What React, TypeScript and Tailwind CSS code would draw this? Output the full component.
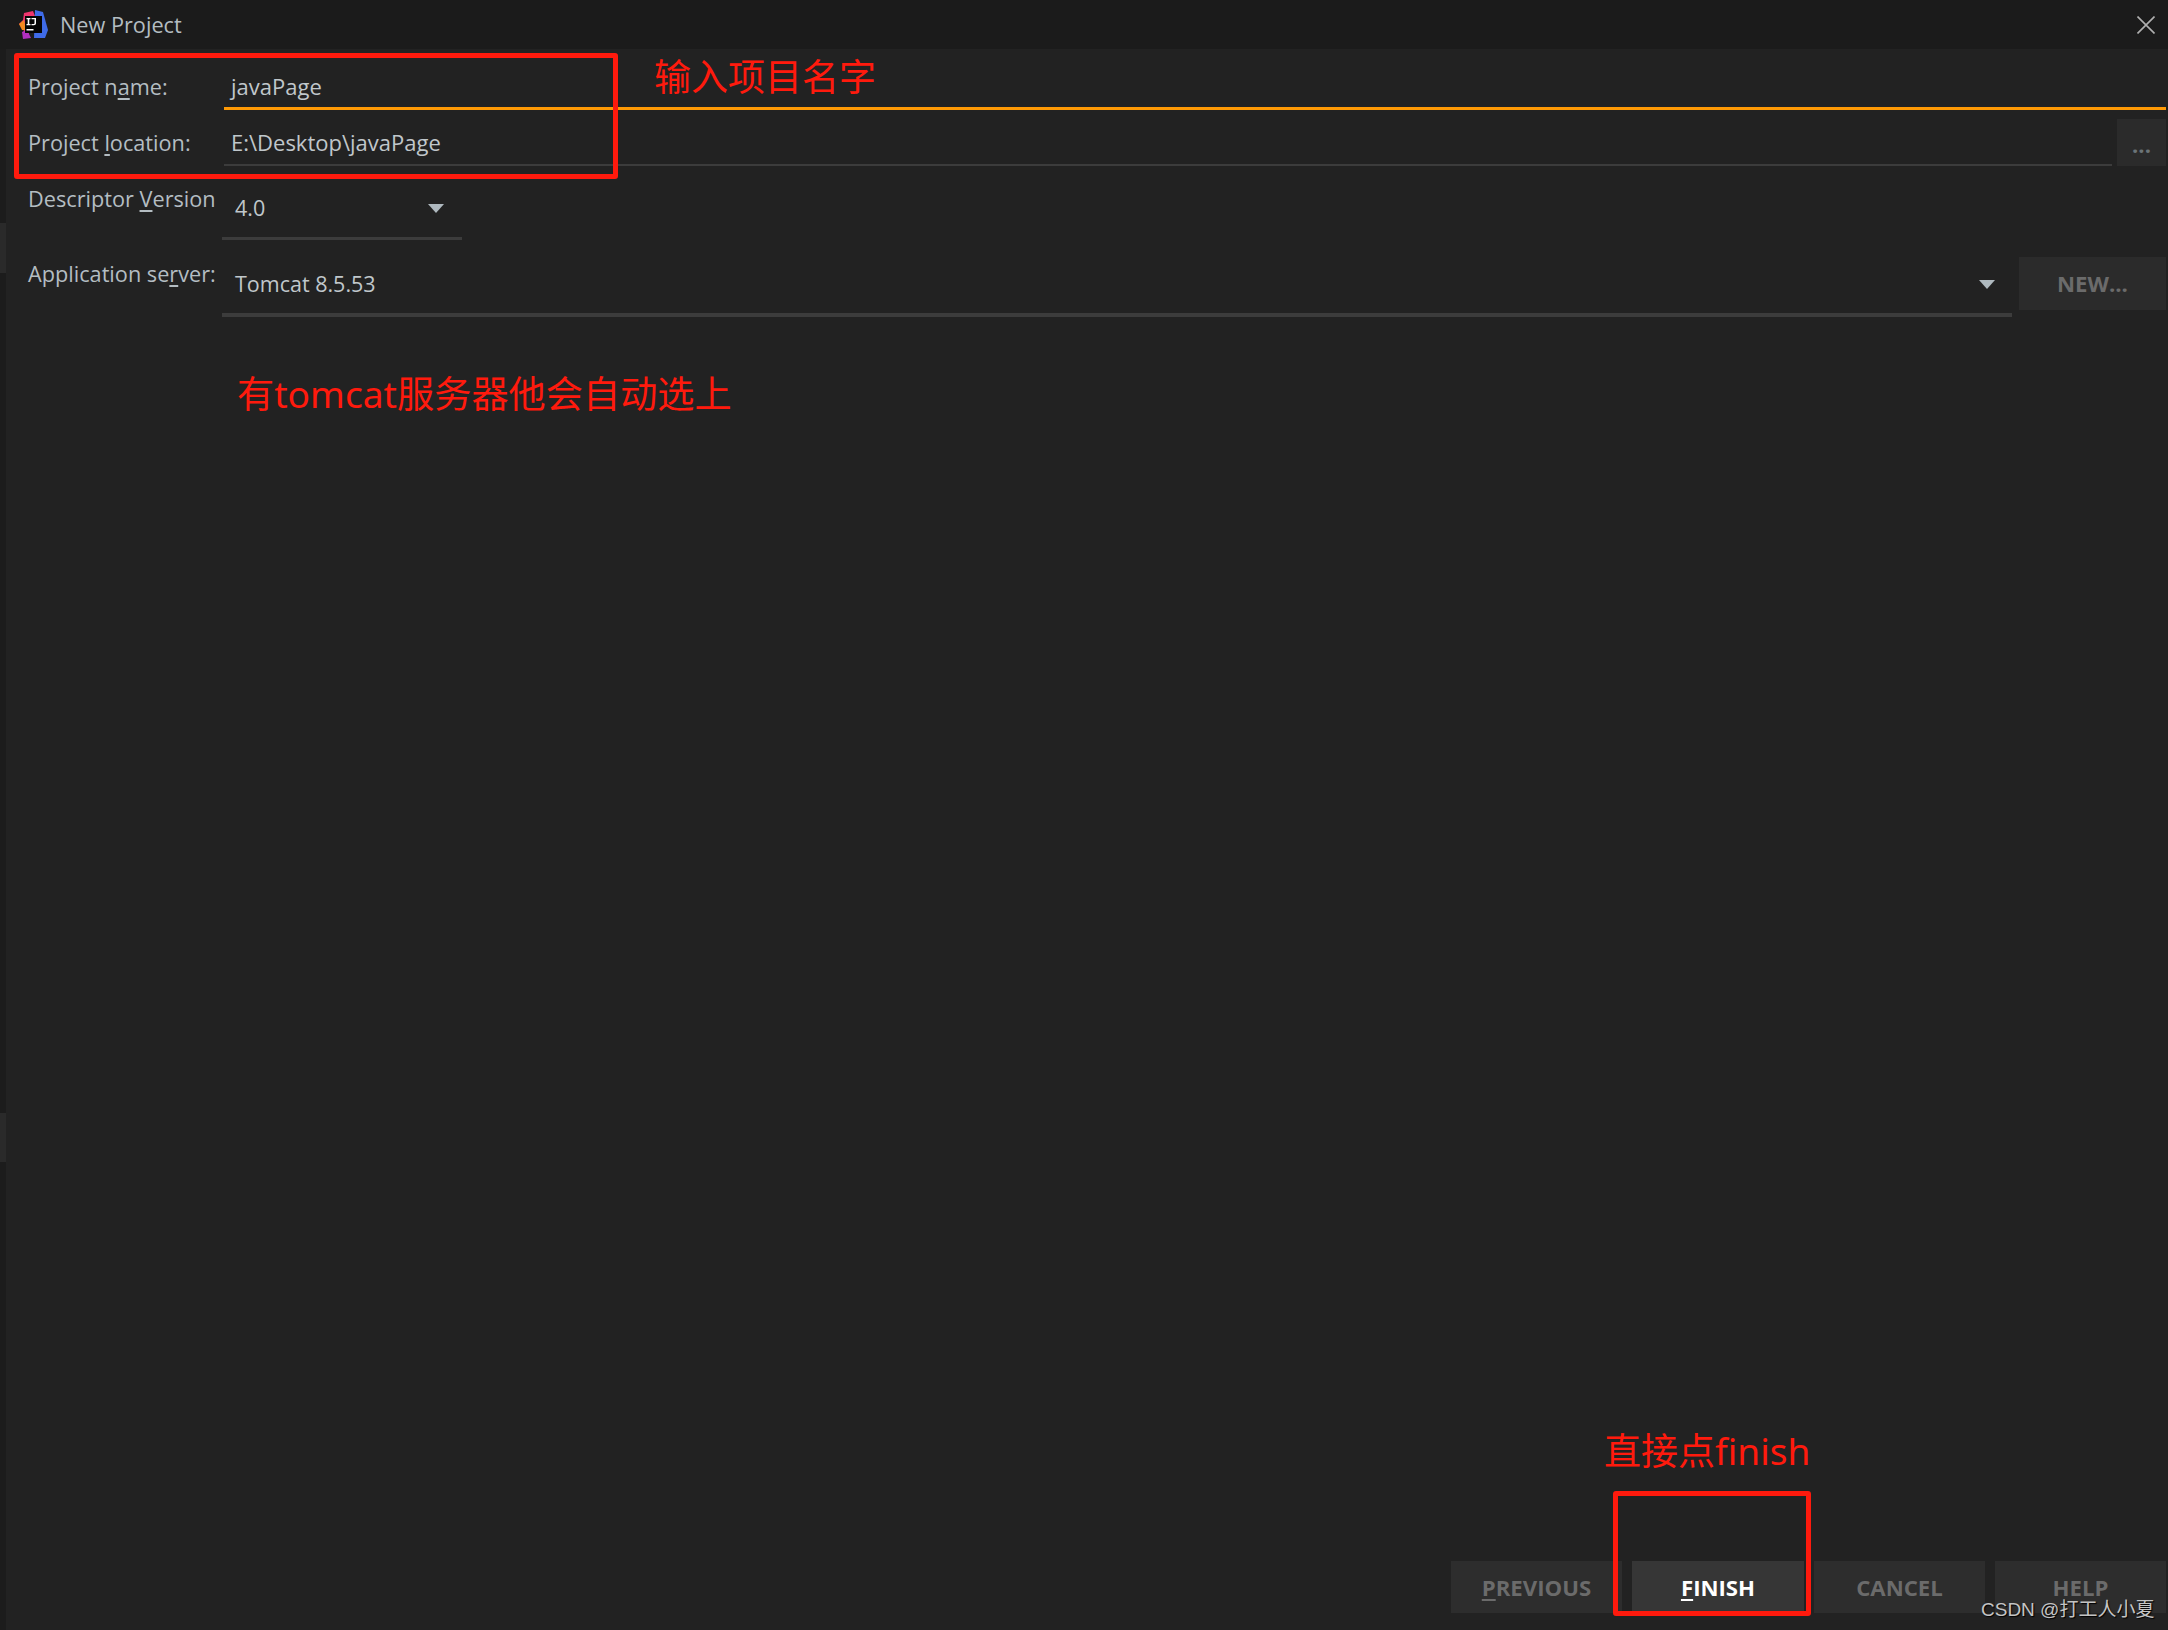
const ui = { fontFamily: '"Open Sans", "Noto Sans", sans-serif' }
const cjk = { fontFamily: '"Noto Sans", "Noto Sans CJK SC", sans-serif' }

const Logo = () => (
	<svg width="30" height="30" viewBox="0 0 30 30" className="mt-[2px] shrink-0">
		<path d="M5 3 L14 1 L16 6 L9 26 L4 28 L5 18 L0 14 L4 10 Z" fill="#f0346e" />
		<path d="M0 14 L5 10 L7 20 L3 20 Z" fill="#f58a1f" />
		<path d="M16 0 L24 2 L29 20 L26 28 L15 28 Z" fill="#3f6be8" />
		<path d="M3 22 L8 20 L12 28 L4 29 Z" fill="#b12fc0" />
		<rect x="6" y="6" width="17" height="17" fill="#050505" />
		<rect x="7.5" y="19" width="7" height="1.5" fill="#ffffff" />
		<path d="M7.5 8 H11.5 V9.2 H10.3 V14 H11.5 V15.2 H7.5 V14 H8.7 V9.2 H7.5 Z M12.5 8 H17 V13.5 Q17 15.2 14.9 15.2 H12.5 V14 H14.7 Q15.5 14 15.5 13.2 V9.2 H12.5 Z" fill="#ffffff" />
	</svg>
)

const Caret = () => (
	<svg width="16" height="9" viewBox="0 0 16 9" className="shrink-0">
		<path d="M0 0 H16 L8 9 Z" fill="#afb9bf" />
	</svg>
)

const Label = (props: { before: string; mark: string; after: string; className?: string }) => (
	<div className={`shrink-0 whitespace-nowrap pl-[22px] text-[21.7px] leading-[28px] text-[#b4bdc2] ${props.className ?? 'w-[216px]'}`}>
		{props.before}
		<span className="underline underline-offset-[3px]">{props.mark}</span>
		{props.after}
	</div>
)

const FooterButton = (props: { mark?: string; rest: string; active?: boolean; width: string }) => (
	<div
		className={`flex h-[52px] items-center justify-center pt-[2px] text-[22.2px] font-bold ${props.width} ${
			props.active ? 'bg-[#363636] text-white' : 'bg-[#2d2d2d] text-[#6b6b6b]'
		}`}
	>
		<span>
			{props.mark && <span className="underline underline-offset-[3px]">{props.mark}</span>}
			{props.rest}
		</span>
	</div>
)

export default function App() {
	return (
		<div className="relative flex h-[1630px] w-[2168px] flex-col overflow-hidden bg-[#222222]" style={ui}>
			<div className="flex h-[49px] shrink-0 items-center justify-between bg-[#1b1b1b] pl-[19px] pr-[13px]">
				<div className="flex items-center gap-[11px]">
					<Logo />
					<span className="pt-[1px] text-[21.7px] text-[#b4bdc2]">New Project</span>
				</div>
				<svg width="18" height="18" viewBox="0 0 18 18">
					<path d="M0.5 0.5 L17.5 17.5 M17.5 0.5 L0.5 17.5" stroke="#b0b0b0" strokeWidth="1.6" />
				</svg>
			</div>

			<div className="flex min-h-0 flex-1">
				<div className="flex w-[6px] shrink-0 flex-col bg-[#1c1c1c]">
					<div className="mt-[174px] h-[50px] bg-[#2a2a2a]" />
					<div className="mt-[840px] h-[49px] bg-[#2a2a2a]" />
				</div>

				<div className="flex min-w-0 flex-1 flex-col pr-[2px]">
					<div className="mt-[17px] flex h-[44px] items-start">
						<Label before="Project n" mark="a" after="me:" className="mt-[7px] w-[218px]" />
						<div className="h-full flex-1 border-b-[3px] border-[#ff9a05] pl-[7px] pt-[6px] text-[22px] leading-[28px] text-[#c0c7cb]">
							javaPage
						</div>
					</div>

					<div className="mt-[9px] flex h-[47px] items-start">
						<Label before="Project " mark="l" after="ocation:" className="mt-[10px] w-[218px]" />
						<div className="h-full flex-1 border-b-2 border-[#3c3c3c] pl-[7px] pt-[9px] text-[22px] leading-[28px] text-[#c0c7cb]">
							E:\Desktop\javaPage
						</div>
						<div className="ml-[5px] flex h-full w-[49px] shrink-0 items-end justify-center bg-[#2b2b2b] pb-[8px] text-[22px] font-bold leading-[28px] text-[#6b7478]">
							...
						</div>
					</div>

					<div className="mt-[19px] flex items-start">
						<Label before="Descriptor " mark="V" after="ersion" />
						<div className="flex h-[55px] w-[240px] items-start justify-between border-b-[3px] border-[#3c3c3c] pl-[13px] pr-[18px] pt-[9px] text-[21.5px] leading-[28px] text-[#c0c7cb]">
							<span>4.0</span>
							<span className="pt-[10px]"><Caret /></span>
						</div>
					</div>

					<div className="mt-[17px] flex items-start">
						<Label before="Application se" mark="r" after="ver:" className="mt-[3px] w-[216px]" />
						<div className="flex h-[60px] w-[1790px] items-start justify-between border-b-[4px] border-[#3c3c3c] pl-[13px] pr-[17px] pt-[13px] text-[21.5px] leading-[28px] text-[#c0c7cb]">
							<span>Tomcat 8.5.53</span>
							<span className="pt-[10px]"><Caret /></span>
						</div>
						<div className="ml-[7px] flex h-[53px] flex-1 items-center justify-center bg-[#2b2b2b] text-[22.2px] font-bold text-[#6b6b6b]">
							NEW...
						</div>
					</div>

					<div className="mt-auto mb-[17px] flex justify-end gap-[10px]">
						<FooterButton mark="P" rest="REVIOUS" width="w-[171px]" />
						<FooterButton mark="F" rest="INISH" active width="w-[172px]" />
						<FooterButton rest="CANCEL" width="w-[171px]" />
						<FooterButton rest="HELP" width="w-[171px]" />
					</div>
				</div>
			</div>

			{/* red annotations drawn over the dialog */}
			<div className="absolute left-[14px] top-[53px] h-[126px] w-[604px] rounded-[3px] border-[5px] border-[#ff1a0d]" />
			<div className="absolute left-[1613px] top-[1491px] h-[125px] w-[198px] rounded-[3px] border-[5px] border-[#ff1a0d]" />
			<div className="absolute left-[654px] top-[52px] whitespace-nowrap text-[37px] leading-[50px] text-[#ff1a0d]" style={cjk}>输入项目名字</div>
			<div className="absolute left-[237px] top-[369px] whitespace-nowrap text-[37.2px] leading-[50px] text-[#ff1a0d]" style={cjk}>有tomcat服务器他会自动选上</div>
			<div className="absolute left-[1604px] top-[1426px] whitespace-nowrap text-[37px] leading-[50px] text-[#ff1a0d]" style={cjk}>直接点finish</div>
			<div className="absolute left-[1981px] top-[1597px] whitespace-nowrap text-[19px] leading-[26px] text-[#c4c4c4] [text-shadow:1px_1px_1px_#000]" style={{ fontFamily: '"Liberation Sans", "Noto Sans CJK SC", sans-serif' }}>CSDN @打工人小夏</div>
		</div>
	)
}
